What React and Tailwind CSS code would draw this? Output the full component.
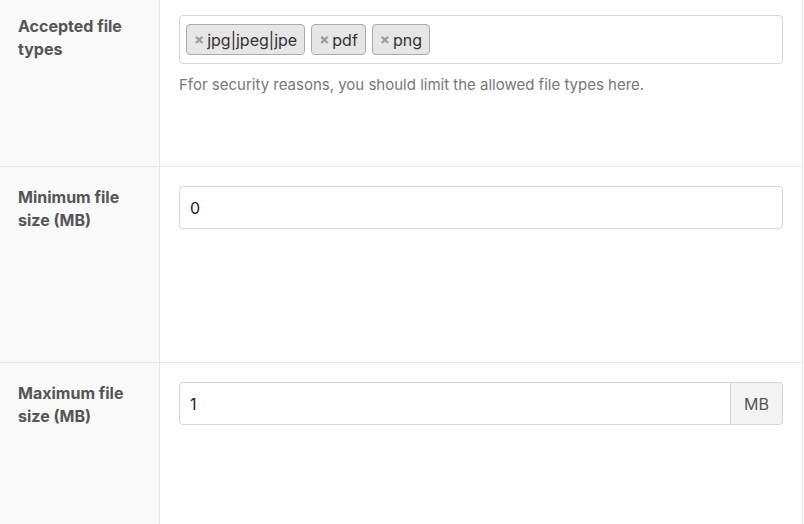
import { useState } from "react"

const tags = ["jpg|jpeg|jpe", "pdf", "png"]

function Label({ text, first = false }) {
  return (
    <div className={`w-[160px] shrink-0 bg-[#f9f9f9] border-r border-[#e5e5e5] pl-[18px] pr-4 ${first ? "pt-[15px]" : "pt-[19px]"}`}>
      <div className="text-[16px] leading-[23px] font-bold text-[#555]">{text}</div>
    </div>
  )
}

export default function App() {
  const [items, setItems] = useState(tags)
  const [min, setMin] = useState("0")
  const [max, setMax] = useState("1")

  return (
    <div className="w-[804px] h-[524px] overflow-hidden bg-white font-['Inter',sans-serif]">
      <div className="w-[803px] border-r border-[#e5e5e5] h-full">
        <div className="flex h-[167px] border-b border-[#e8e8e8]">
          <Label text="Accepted file types" first />
          <div className="flex-1 px-[19px] pt-[15px]">
            <div className="h-[49px] border border-[#d4d6de] rounded-[4px] flex items-center gap-[6px] px-[6px]">
              {items.map((t) => (
                <span
                  key={t}
                  className="h-[31px] flex items-center gap-[3px] px-[7px] bg-[#e6e6e6] border border-[#aaa] rounded-[4px] text-[16px] text-[#333]"
                >
                  <button onClick={() => setItems(items.filter((i) => i !== t))} className="text-[#999] text-[15px] font-bold leading-none">
                    ×
                  </button>
                  {t}
                </span>
              ))}
            </div>
            <p className="mt-[10px] text-[15px] text-[#777]">
              Ffor security reasons, you should limit the allowed file types here.
            </p>
          </div>
        </div>
        <div className="flex h-[196px] border-b border-[#e8e8e8]">
          <Label text="Minimum file size (MB)" />
          <div className="flex-1 px-[19px] pt-[19px]">
            <input
              value={min}
              onChange={(e) => setMin(e.target.value)}
              className="w-full h-[43px] border border-[#d4d6de] rounded-[4px] px-[10px] text-[16px] text-[#222] outline-none"
            />
          </div>
        </div>
        <div className="flex h-[170px]">
          <Label text="Maximum file size (MB)" />
          <div className="flex-1 px-[19px] pt-[19px]">
            <div className="flex h-[43px]">
              <input
                value={max}
                onChange={(e) => setMax(e.target.value)}
                className="flex-1 min-w-0 border border-[#d4d6de] rounded-l-[4px] px-[10px] text-[16px] text-[#222] outline-none"
              />
              <span className="w-[52px] flex items-center justify-center border border-l-0 border-[#d4d6de] rounded-r-[4px] bg-[#f3f3f3] text-[16px] text-[#555]">
                MB
              </span>
            </div>
          </div>
        </div>
      </div>
    </div>
  )
}
